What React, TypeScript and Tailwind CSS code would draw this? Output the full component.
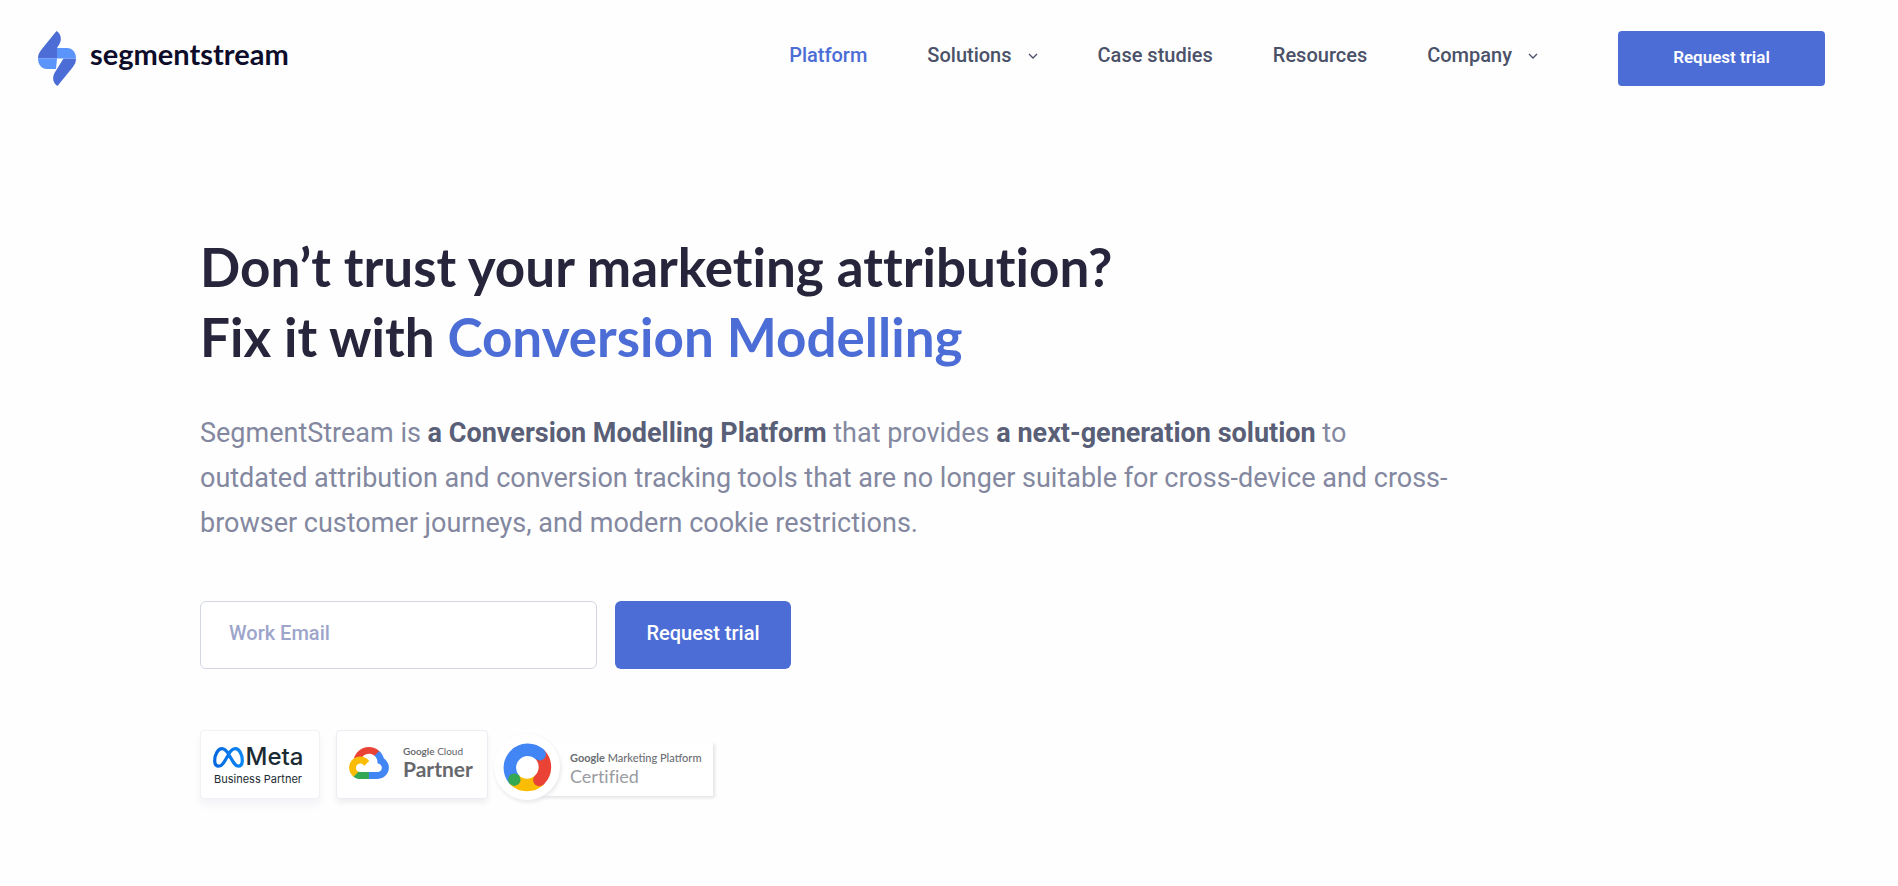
import React from "react";

const navItems = [
  { label: "Platform", active: true, menu: false },
  { label: "Solutions", active: false, menu: true },
  { label: "Case studies", active: false, menu: false },
  { label: "Resources", active: false, menu: false },
  { label: "Company", active: false, menu: true },
];

function LogoMark() {
  return (
    <svg viewBox="0 0 38 55" className="h-[55px] w-[38px]" aria-hidden="true">
      <path d="M18.500 0 C22.500 2 24.300 8 21.500 13 L19 17 V27.500 H0 C0 24 1.200 21.500 3.500 18.500 Z" fill="#4c6dd6" />
      <path d="M19.500 55 C15.500 53 13.700 47 16.500 42 L25.500 27.500 H38 C38 31 36.800 33.500 34.500 36.500 Z" fill="#4c6dd6" />
      <path d="M19 17 H29 C34.500 17 38 21.500 38 27.500 H19 Z" fill="#5b94fb" />
      <path d="M19 27.500 L18 38 H9 C3.500 38 0 33.500 0 27.500 Z" fill="#5b94fb" />
    </svg>
  );
}

function Chevron() {
  return (
    <svg viewBox="0 0 10 6" className="mt-0.5 h-[6px] w-[10px]" aria-hidden="true">
      <path d="M1 1 L5 5 L9 1" fill="none" stroke="#4a5168" strokeWidth="1.3" />
    </svg>
  );
}

function MetaMark() {
  return (
    <svg viewBox="0 0 31 21" className="h-[21px] w-[31px]" aria-hidden="true">
      <defs>
        <linearGradient id="meta" x1="0" x2="1" y1="0" y2="0">
          <stop offset="0" stopColor="#0668e1" />
          <stop offset="1" stopColor="#0a86f5" />
        </linearGradient>
      </defs>
      <path
        d="M15.500 7 C13 3 11.500 1.700 9 1.700 C5 1.700 1.700 7.500 1.700 13.500 C1.700 17 3.200 19.200 5.800 19.200 C8.500 19.200 10.200 17.200 15.500 7.500 C17.500 3.800 19.500 1.700 22.300 1.700 C26.300 1.700 29.300 7.500 29.300 13.500 C29.300 17 27.800 19.200 25.200 19.200 C22.500 19.200 20.800 16.500 15.500 7 Z"
        fill="none"
        stroke="url(#meta)"
        strokeWidth="3.200"
        strokeLinejoin="round"
      />
    </svg>
  );
}

function CloudMark() {
  return (
    <svg viewBox="0 0 256 206" className="h-8 w-10" aria-hidden="true">
      <path fill="#EA4335" d="M170.252 56.819L192.505 34.566L193.988 25.196C153.437 -11.677 88.976 -7.496 52.421 33.921C42.269 45.423 34.734 59.764 30.717 74.573L38.687 73.449L83.191 66.110L86.627 62.596C106.424 40.855 139.897 37.931 162.756 56.428Z" />
      <path fill="#4285F4" d="M224.205 73.918C219.090 55.082 208.588 38.149 193.988 25.196L162.756 56.428C175.945 67.204 183.451 83.438 183.137 100.465V106.009C198.490 106.009 210.935 118.454 210.935 133.807C210.935 149.159 198.490 161.291 183.137 161.291H127.464L121.998 167.228V200.567L127.464 205.801H183.137C223.069 206.112 255.686 174.302 255.996 134.370C256.185 110.168 244.253 87.476 224.205 73.918" />
      <path fill="#34A853" d="M71.870 205.796H127.464V161.291H71.870C67.910 161.291 63.995 160.439 60.392 158.791L52.500 161.213L30.090 183.466L28.138 191.028C40.705 200.515 56.123 205.892 71.870 205.796" />
      <path fill="#FBBC05" d="M71.870 61.426C31.938 61.664 -.237 94.229 .001 134.161C.134 156.459 10.548 177.446 28.138 191.028L60.387 158.779C46.397 152.458 40.179 135.992 46.499 122.002C52.820 108.012 69.286 101.794 83.276 108.114C89.441 110.900 94.378 115.838 97.164 122.002L129.413 89.753C115.690 71.815 94.365 61.336 71.870 61.426" />
    </svg>
  );
}

function MarketingMark() {
  return (
    <svg viewBox="0 0 50 50" className="h-[50px] w-[50px]" aria-hidden="true">
      <g fill="none" strokeWidth="12.500">
        <path d="M37.700 37.700 A18 18 0 0 1 12.300 37.700" stroke="#fbbc04" />
        <path d="M37.700 12.300 A18 18 0 0 1 37.700 37.700" stroke="#ea4335" />
        <path d="M12.300 37.700 A18 18 0 0 1 37.700 12.300" stroke="#4285f4" />
      </g>
      <circle cx="37.700" cy="12.300" r="6.250" fill="#4285f4" />
      <circle cx="37.300" cy="38.100" r="6.250" fill="#ea4335" />
      <circle cx="12.300" cy="37.700" r="6.250" fill="#34a853" />
    </svg>
  );
}

export default function App() {
  return (
    <div className="min-h-screen bg-[#fefefe] font-['Roboto',sans-serif] text-[#4a5168]">
      <header className="flex items-center justify-between pt-[31px] pr-[73px] pl-[38px]">
        <a href="#" className="flex items-center gap-3.5">
          <LogoMark />
          <span className="pb-2.5 font-['Lato',sans-serif] text-[29px] leading-9 font-bold text-[#0d0d2b] [font-variant-ligatures:none]">
            segmentstream
          </span>
        </a>
        <div className="flex items-center gap-20">
          <nav className="flex items-center gap-[60px] pb-2 text-xl leading-6 font-medium">
            {navItems.map((item) => (
              <a key={item.label} href="#" className={item.active ? "text-[#4c6dd6]" : "flex items-center gap-4"}>
                {item.label}
                {item.menu && <Chevron />}
              </a>
            ))}
          </nav>
          <button type="button" className="h-[55px] w-[207px] rounded-sm bg-[#4c6dd6] pb-0.5 text-[17px] font-semibold text-white">
            Request trial
          </button>
        </div>
      </header>

      <main className="px-[200px] pt-[146px]">
        <h1 className="font-['Lato',sans-serif] text-[53px] leading-[70px] font-bold text-[#26253b] [font-variant-ligatures:none]">
          Don’t trust your marketing attribution?
          <br />
          Fix it with <span className="text-[#4c6dd6]">Conversion Modelling</span>
        </h1>

        <p className="mt-[39px] max-w-[1256px] text-[27px] leading-[45px] text-[#8388a0]">
          SegmentStream is <strong className="font-bold text-[#5a5f78]">a Conversion Modelling Platform</strong> that provides{" "}
          <strong className="font-bold text-[#5a5f78]">a next-generation solution</strong> to
          <br />
          outdated attribution and conversion tracking tools that are no longer suitable for cross-device and cross-browser customer
          journeys, and modern cookie restrictions.
        </p>

        <form className="mt-[55px] flex gap-[18px]" onSubmit={(e) => e.preventDefault()}>
          <input
            type="email"
            aria-label="Work Email"
            placeholder="Work Email"
            className="h-[68px] w-[397px] rounded-md border border-[#d3d7e4] bg-white px-7 pb-1 text-xl font-medium text-[#4a5168] placeholder:text-[#9da5cb]"
          />
          <button type="submit" className="h-[68px] w-44 rounded-md bg-[#4c6dd6] pb-1 text-xl font-medium text-white">
            Request trial
          </button>
        </form>

        <div className="mt-[61px] flex items-start gap-4">
          <div className="flex h-[69px] w-[120px] flex-col items-center rounded-sm border border-[#f1f1f6] bg-white pt-3 pr-1 shadow-[0_6px_8px_#f3f3f8]">
            <div className="flex items-center gap-0.5 font-['Inter',sans-serif] text-2xl leading-7 font-medium text-[#1c2b33]">
              <MetaMark />
              Meta
            </div>
            <div className="font-['Inter',sans-serif] text-[11px] leading-4 text-[#1c2b33]">Business Partner</div>
          </div>

          <div className="flex h-[69px] w-[152px] items-center gap-3.5 rounded-sm border border-[#ebebf1] bg-white pb-1 pl-3 shadow-[0_4px_5px_#f0f0f4]">
            <CloudMark />
            <div className="font-['Lato',sans-serif] text-[#5f6368]">
              <div className="text-[10px] leading-3">
                <span className="font-semibold">Google</span> Cloud
              </div>
              <div className="text-[21px] leading-6 font-bold text-[#66686c]">Partner</div>
            </div>
          </div>

          <div className="relative mt-3 ml-[22px] h-[54px] w-[187px] bg-white pt-2 pl-11 font-['Lato',sans-serif] shadow-[2px_2px_3px_#e4e4e8]">
            <div className="absolute -top-2 -left-8 flex h-[66px] w-[66px] items-center justify-center rounded-full bg-white shadow-[1px_2px_4px_#e6e6ea]">
              <MarketingMark />
            </div>
            <div className="text-[11px] leading-4 font-medium whitespace-nowrap text-[#6b6e73]">
              <span className="font-bold">Google</span> Marketing Platform
            </div>
            <div className="text-lg leading-5 text-[#9a9ca1] [font-variant-ligatures:none]">Certified</div>
          </div>
        </div>
      </main>
    </div>
  );
}
